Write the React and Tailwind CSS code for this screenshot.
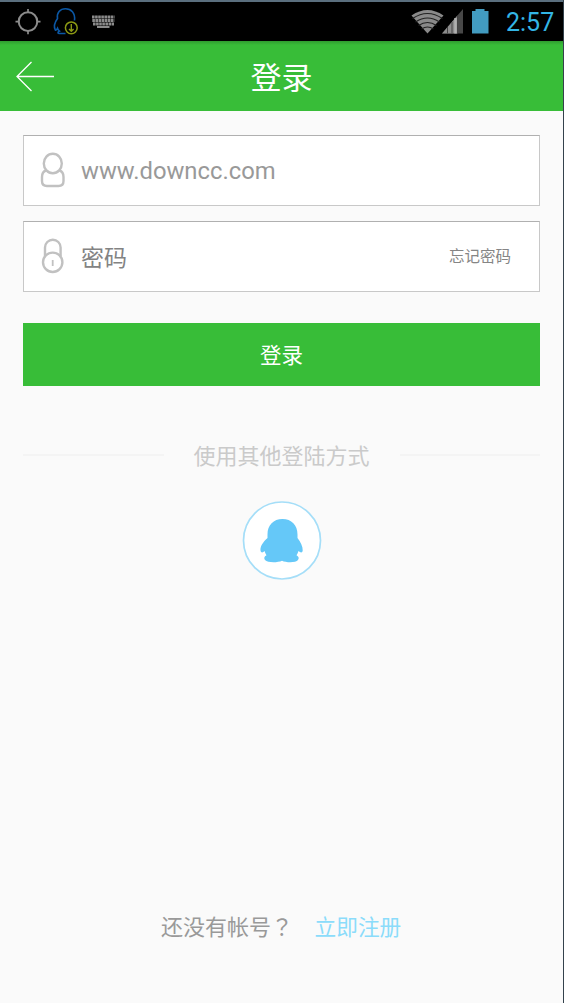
function StatusBar() {
  return (
    <div className="flex h-[41px] items-center border-t-2 border-[#5b6f7e] bg-black">
      <svg className="h-[39px] w-[130px]" viewBox="0 2 130 39" fill="none">
        <circle cx="28" cy="21.6" r="9.3" stroke="#8c8c8c" strokeWidth="2" />
        <path d="M28 9v4M28 30.300v4M15.500 21.600h4M36.500 21.600h4" stroke="#8c8c8c" strokeWidth="1.700" />
        <path
          d="M74.500 20.500C75.500 13 71 8.800 65.500 8.800S56.500 13 57.500 18.500C55 22 53.500 26.500 55.300 30c1 .6 1.700-1 2.200-1.800.3 1.200 1 2 2 2.800-2 1-2 2.500 0 2.500h6"
          stroke="#0b57a4"
          strokeWidth="1.600"
        />
        <circle cx="71.300" cy="27.800" r="5.900" fill="#000" stroke="#8c9914" strokeWidth="1.500" />
        <path d="M71.300 24v7M69 29l2.300 2.300L73.600 29" stroke="#8c9914" strokeWidth="1.400" />
        <path d="M92 17h22.500M92.300 20.500h22M93 24h21" stroke="#8b8b8b" strokeWidth="2.800" strokeDasharray="2.600 .5" />
        <path d="M97 27h12.500" stroke="#8b8b8b" strokeWidth="2" />
      </svg>
      <svg className="ml-auto h-[39px] w-[90px]" viewBox="408 2 90 39" fill="none">
        <path d="M411.500 15.500Q427.500 4.500 443.500 15.500L427.500 33.500Z" fill="#8a8a8a" />
        <g stroke="#222" strokeWidth="1.200">
          <path d="M412.500 18.500Q427.500 8.500 442.500 18.500M415.500 22Q427.500 14 439.500 22M418.500 25.500Q427.500 19.500 436.500 25.500M421.500 29Q427.500 25 433.500 29" />
        </g>
        <path d="M442 33.500 463 9v24.500Z" fill="#484848" />
        <path d="M442 33.500 457 16v17.500Z" fill="#8c8c8c" />
        <path d="M447.500 27v6.500M452 22v11.500M457.500 15.500v18" stroke="#444" strokeWidth="1" />
        <path d="M455.500 18v15.500" stroke="#b0b0b0" strokeWidth="2.500" />
        <path d="M472 11h3.500V9h9v2h4v22.500H472Z" fill="#429bc0" />
      </svg>
      <span className="mr-[10px] ml-2 w-[47px] pt-[2px] text-center font-['Roboto',sans-serif] text-[25px] leading-[37px] text-[#33b5e5]">
        2:57
      </span>
    </div>
  );
}

function Header() {
  return (
    <header className="flex h-[70px] items-center bg-[#38bd38] bg-linear-to-b from-[#2f9c2f] to-[#38bd38] to-[4px]">
      <svg className="ml-[15px] h-8 w-10" viewBox="0 0 40 32" fill="none" stroke="#fff" strokeWidth="1.300">
        <path d="M39 16.500H2M16.500 2 2 16.500 16.500 31" />
      </svg>
      <h1 className="flex-1 pr-[55px] pb-px text-center text-[31px] leading-none text-white">登录</h1>
    </header>
  );
}

function UserIcon() {
  return (
    <svg className="mb-px h-9 w-[26px]" viewBox="0 0 26 36" fill="none" stroke="#c1c1c1" strokeWidth="2.400">
      <ellipse cx="12.800" cy="11.500" rx="9" ry="9.700" />
      <path d="M6 18.500C3 19.500 2 22 2 25v4c0 3 2 5 5 5h11.500c3 0 5-2 5-5v-4c0-3-1-5.500-4-6.500" />
    </svg>
  );
}

function LockIcon() {
  return (
    <svg className="mb-px h-9 w-[26px]" viewBox="0 0 26 36" fill="none" stroke="#c1c1c1" strokeWidth="2.400">
      <path d="M5 18V9.500a7.800 7.800 0 0 1 15.600 0V18" />
      <circle cx="12.700" cy="24.300" r="9.700" />
      <path d="M12.700 22v6" strokeWidth="1.800" />
    </svg>
  );
}

const field =
  "flex h-[71px] items-center border border-[#c8c8c8] border-t-[#b0b0b0] bg-white pl-4 pr-7";

export default function App() {
  return (
    <div className="flex h-[1003px] w-[564px] flex-col border-r border-[#34424c] bg-[#fafafa] font-['Noto_Sans_CJK_SC',sans-serif]">
      <StatusBar />
      <Header />

      <main className="flex flex-1 flex-col px-[23px] pt-6">
        <div className={field}>
          <UserIcon />
          <span className="ml-[15px] pt-[2px] font-['Roboto',sans-serif] text-[23.800px] text-[#999]">
            www.downcc.com
          </span>
        </div>
        <div className={`${field} mt-[15px]`}>
          <LockIcon />
          <span className="ml-[15px] pb-px text-[23px] text-[#838383]">密码</span>
          <a className="ml-auto pb-[2px] text-[15.5px] text-[#858585]">忘记密码</a>
        </div>

        <button className="mt-[31px] h-[63px] bg-[#38bd38] text-[21.5px] text-white">登录</button>

        <div className="mt-[53px] flex h-8 items-center">
          <span className="h-0.5 flex-1 bg-[#f4f4f4]" />
          <span className="mx-[30px] pb-[3px] text-[22px] leading-8 text-[#cacaca]">使用其他登陆方式</span>
          <span className="h-0.5 flex-1 bg-[#f4f4f4]" />
        </div>

        <svg className="mt-[30px] h-20 w-20 self-center" viewBox="0 0 80 80">
          <circle cx="40" cy="39.500" r="38.500" fill="#fff" stroke="#a5def8" strokeWidth="1.700" />
          <path
            fill="#65c8f8"
            d="M40.500 18C31.500 18 25.500 24 25.500 33.500v3.500C21 41 18 45.500 18.500 49.500c.3 2.500 2.500 2.500 4 .5.500 1.500 1.200 3 2 4.300-2.500 1.200-2.700 3-1.500 4.700 2.500 2.800 12.500 2.800 17 .7 4.500 2.100 14 2.100 16-.7 1.500-2 .5-3.700-1.500-4.700.9-1.300 1.500-2.800 2-4.300 2 2 4 2 4.200-.5.300-4-2.200-8.500-5.200-12.500v-3.500C55.500 24 49.500 18 40.500 18Z"
          />
        </svg>

        <footer className="mt-auto mb-[61px] flex pl-[138px] text-[22px] leading-8">
          <span className="text-[#999]">
            还没有帐号<span className="font-['Noto_Sans_CJK_TC',sans-serif]">？</span>
          </span>
          <a className="ml-[21.5px] pt-px text-[21.700px] text-[#8bdcfb]">立即注册</a>
        </footer>
      </main>
    </div>
  );
}
